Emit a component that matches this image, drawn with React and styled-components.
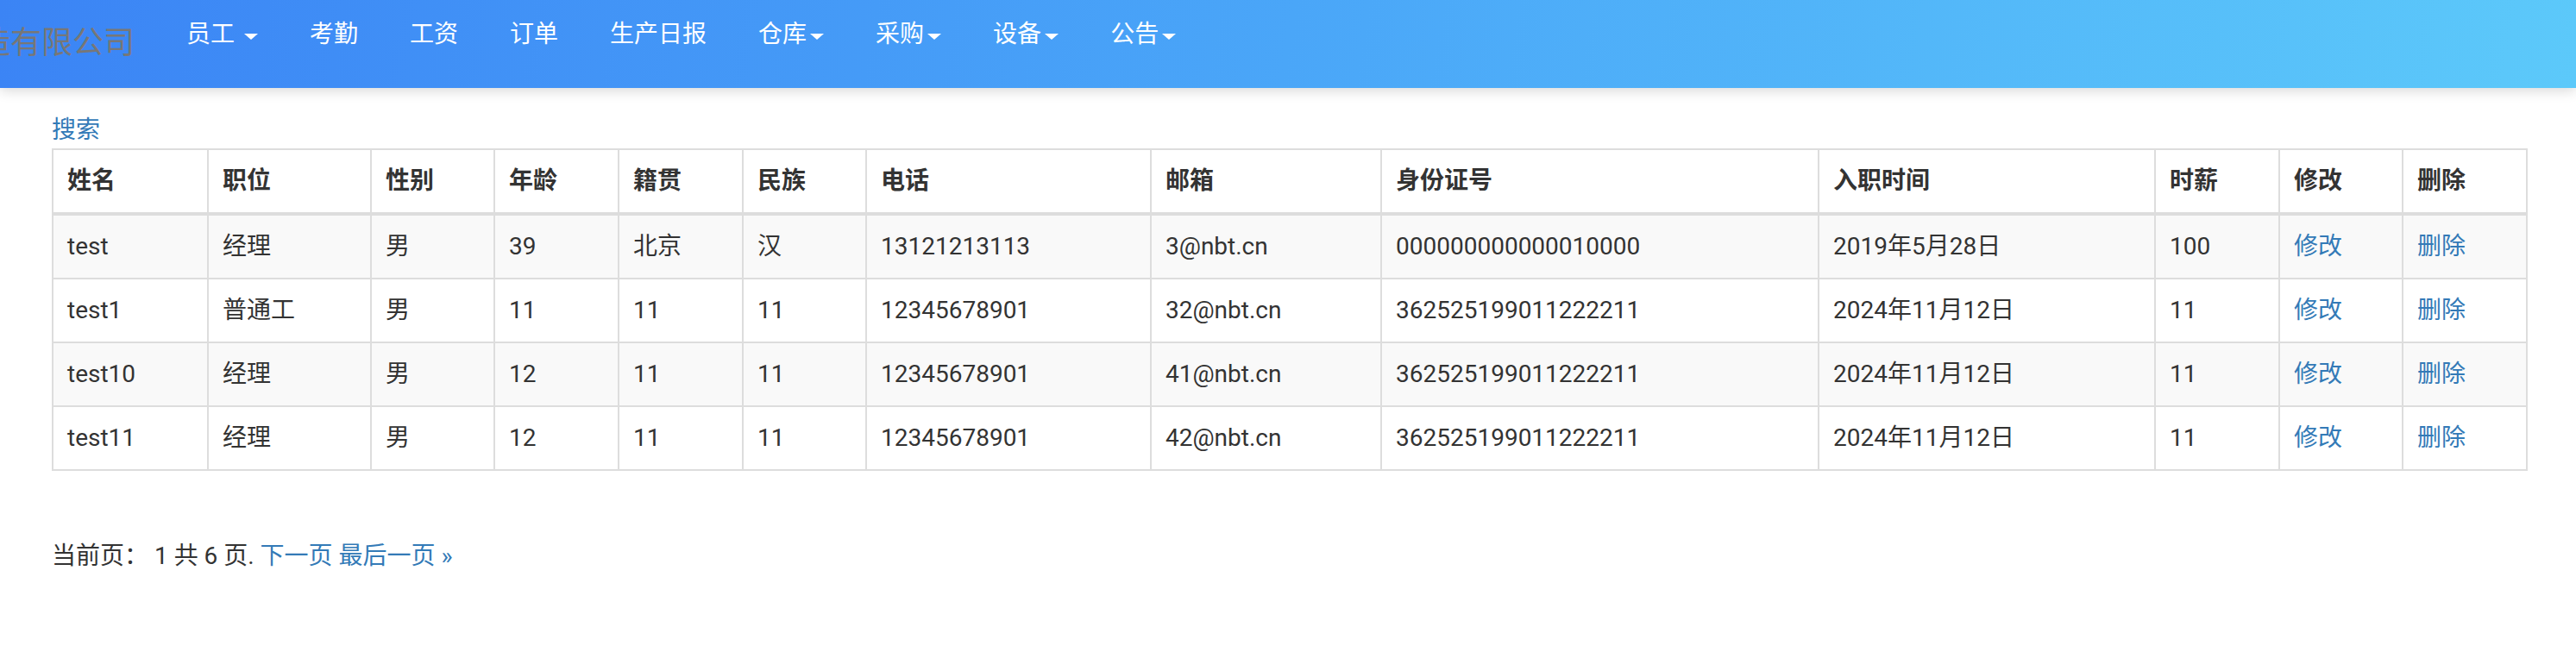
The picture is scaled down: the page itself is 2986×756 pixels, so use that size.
import React from 'react';
import styled, { createGlobalStyle } from 'styled-components';

const GlobalStyle = createGlobalStyle`
  html, body {
    margin: 0;
    padding: 0;
    background: #fff;
  }
  body {
    font-family: Roboto, "Noto Sans CJK SC", sans-serif;
    font-size: 28px;
    line-height: 40px;
    color: #333;
    overflow: hidden;
  }
`;

const columns = [
  { title: '姓名', width: 180 },
  { title: '职位', width: 189 },
  { title: '性别', width: 143 },
  { title: '年龄', width: 144 },
  { title: '籍贯', width: 144 },
  { title: '民族', width: 143 },
  { title: '电话', width: 330 },
  { title: '邮箱', width: 267 },
  { title: '身份证号', width: 507 },
  { title: '入职时间', width: 390 },
  { title: '时薪', width: 144 },
  { title: '修改', width: 143 },
  { title: '删除', width: 144 },
];

const rows = [
  ['test', '经理', '男', '39', '北京', '汉', '13121213113', '3@nbt.cn', '000000000000010000', '2019年5月28日', '100'],
  ['test1', '普通工', '男', '11', '11', '11', '12345678901', '32@nbt.cn', '362525199011222211', '2024年11月12日', '11'],
  ['test10', '经理', '男', '12', '11', '11', '12345678901', '41@nbt.cn', '362525199011222211', '2024年11月12日', '11'],
  ['test11', '经理', '男', '12', '11', '11', '12345678901', '42@nbt.cn', '362525199011222211', '2024年11月12日', '11'],
];

const menu = [
  { label: '员工', caret: true, spaced: true },
  { label: '考勤' },
  { label: '工资' },
  { label: '订单' },
  { label: '生产日报' },
  { label: '仓库', caret: true },
  { label: '采购', caret: true },
  { label: '设备', caret: true },
  { label: '公告', caret: true },
];

const App = () => {
  return (
    <>
      <GlobalStyle />
      <Navbar>
        <Brand>宁波智能制造有限公司</Brand>
        <NavList>
          {menu.map((item) => (
            <NavItem key={item.label}>
              <NavLink>
                {item.label}
                {item.caret && <Caret $spaced={item.spaced} />}
              </NavLink>
            </NavItem>
          ))}
        </NavList>
      </Navbar>

      <Content>
        <SearchLink>搜索</SearchLink>
        <Table>
          <colgroup>
            {columns.map((c) => (
              <col key={c.title} style={{ width: c.width }} />
            ))}
          </colgroup>
          <thead>
            <tr>
              {columns.map((c) => (
                <Th key={c.title}>{c.title}</Th>
              ))}
            </tr>
          </thead>
          <tbody>
            {rows.map((r, i) => (
              <Row key={r[0]} $striped={i % 2 === 0}>
                {r.map((v, j) => (
                  <Td key={j}>{v}</Td>
                ))}
                <Td><Link>修改</Link></Td>
                <Td><Link>删除</Link></Td>
              </Row>
            ))}
          </tbody>
        </Table>

        <Pager>
          当前页：&nbsp;1 共 6 页. <Link>下一页</Link> <Link>最后一页 »</Link>
        </Pager>
      </Content>
    </>
  );
};

const Navbar = styled.nav`
  display: flex;
  align-items: flex-start;
  height: 102px;
  background: linear-gradient(100deg, #3b84f5 0%, #4aa6f8 50%, #5cc9fa 100%);
  box-shadow: 0 3px 14px rgba(0, 0, 0, 0.16);
  overflow: hidden;
  position: relative;
  z-index: 1;
`;

const Brand = styled.div`
  flex: 0 0 auto;
  width: 180px;
  margin-left: -54px;
  padding: 30px;
  font-size: 36px;
  line-height: 40px;
  color: #777;
  white-space: nowrap;
  direction: rtl;
  overflow: hidden;
`;

const NavList = styled.ul`
  display: flex;
  list-style: none;
  margin: 0;
  padding: 0;
`;

const NavItem = styled.li`
  display: block;
`;

const NavLink = styled.a`
  display: flex;
  align-items: center;
  padding: 20px 30px;
  line-height: 40px;
  font-size: 28px;
  color: #fff;
  cursor: pointer;
`;

const Caret = styled.span`
  display: inline-block;
  width: 0;
  height: 0;
  margin-left: ${(p) => (p.$spaced ? '11px' : '4px')};
  margin-top: 4px;
  border-top: 7px solid #fff;
  border-left: 8px solid transparent;
  border-right: 8px solid transparent;
`;

const Content = styled.main`
  padding: 29px 58px 0 60px;
`;

const Link = styled.a`
  color: #337ab7;
  text-decoration: none;
  cursor: pointer;
`;

const SearchLink = styled(Link)`
  display: block;
  line-height: 40px;
  margin-bottom: 1px;
`;

const Table = styled.table`
  width: 100%;
  table-layout: fixed;
  border-collapse: collapse;
  border-spacing: 0;
  border: 2px solid #ddd;
  margin-bottom: 79px;
`;

const Th = styled.th`
  text-align: left;
  font-weight: bold;
  padding: 16px;
  vertical-align: bottom;
  border: 2px solid #ddd;
  border-bottom-width: 4px;
  white-space: nowrap;
`;

const Row = styled.tr`
  background: ${(p) => (p.$striped ? '#f9f9f9' : '#fff')};
`;

const Td = styled.td`
  padding: 16px;
  vertical-align: top;
  border: 2px solid #ddd;
  white-space: nowrap;
`;

const Pager = styled.div`
  line-height: 40px;
`;

export default App;
